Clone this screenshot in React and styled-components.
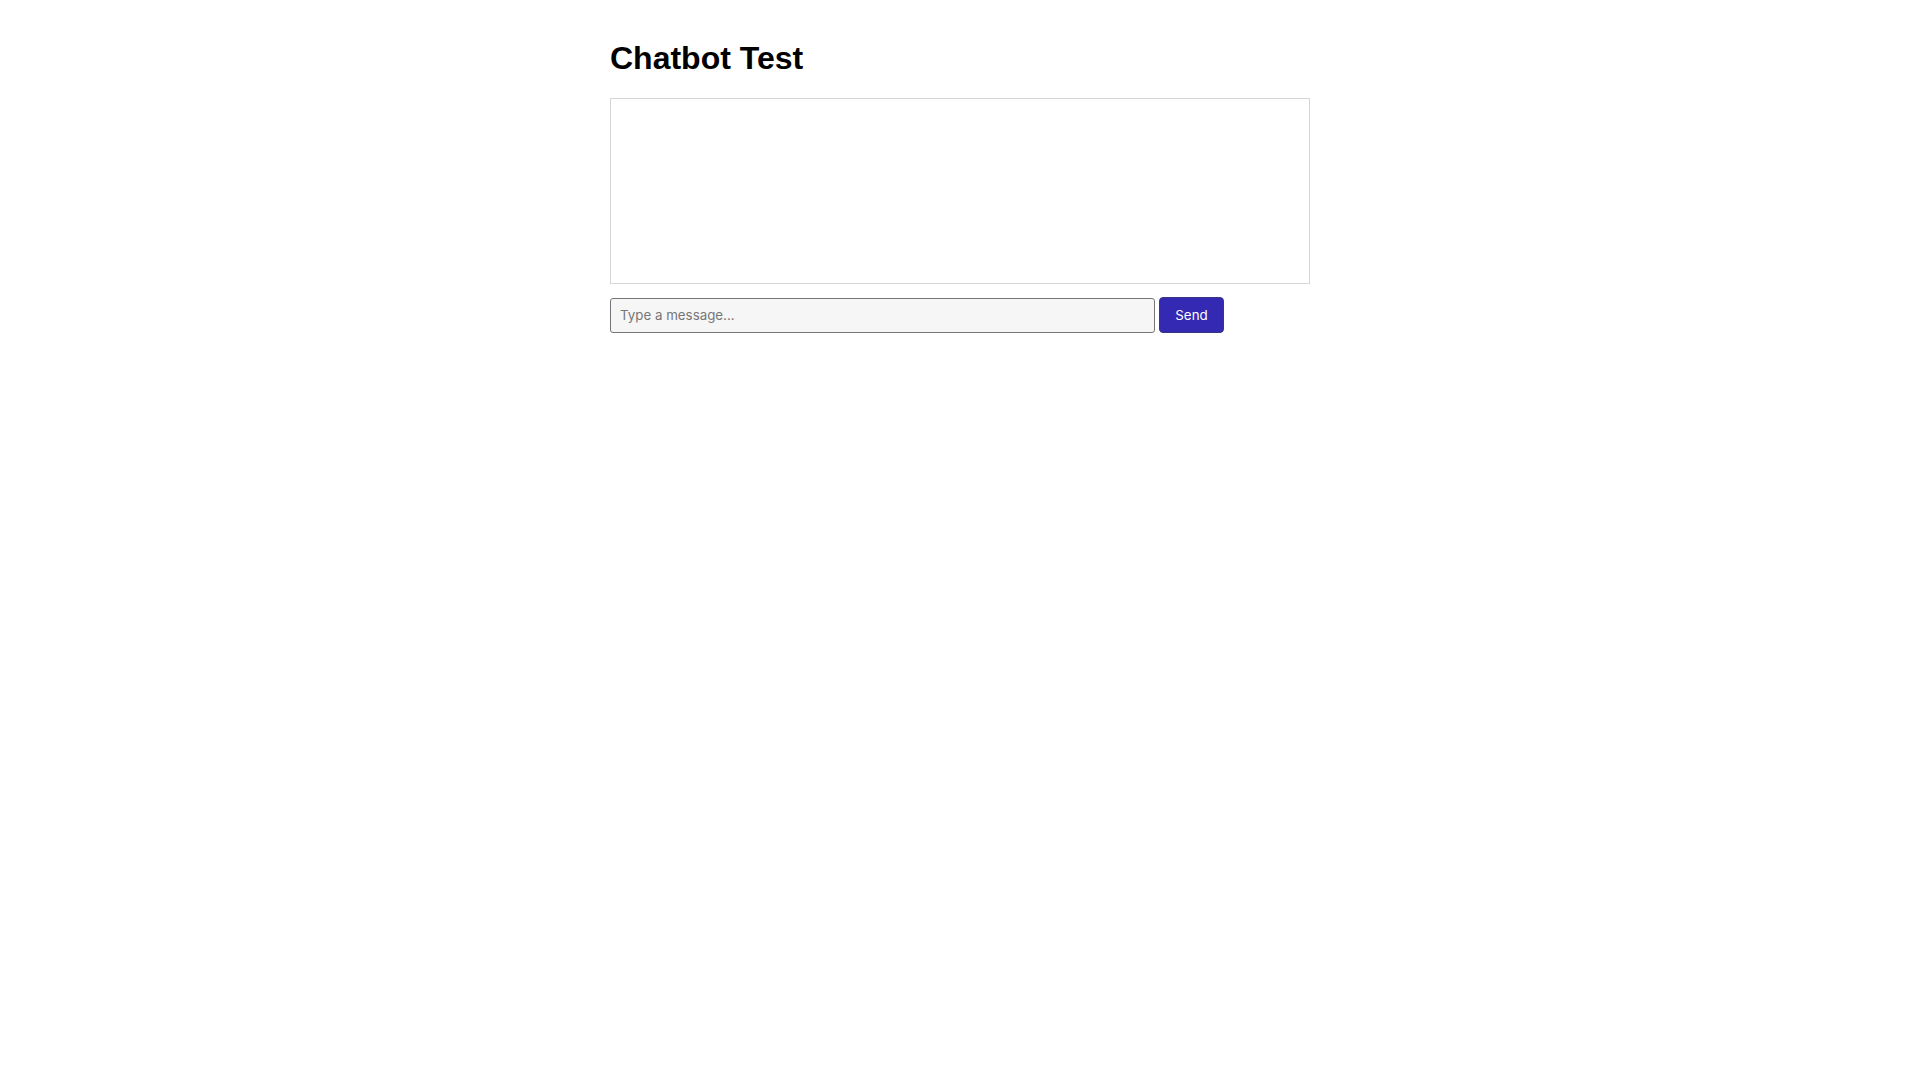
import React, { useState } from 'react'
import styled, { createGlobalStyle } from 'styled-components'

const Global = createGlobalStyle`
body {
  margin: 0;
  background: #fff;
  font-family: 'Liberation Sans', Arial, sans-serif;
}
`

const Page = styled.div`
width: 700px;
margin: 0 auto;
padding-top: 19px;
`

const Titulo = styled.h1`
font-family: 'Liberation Sans', Arial, sans-serif;
font-size: 32px;
font-weight: bold;
color: #000;
margin: 21px 0 21px;
line-height: 37px;
`

const Mensagens = styled.div`
box-sizing: border-box;
height: 186px;
border: 1px solid #d6d6d6;
padding: 10px;
overflow-y: auto;
`

const Linha = styled.div`
display: flex;
align-items: center;
gap: 4px;
margin-top: 13px;
`

const Entrada = styled.input`
box-sizing: border-box;
width: 545px;
height: 35px;
padding: 0 9px;
font-family: Inter, 'Noto Sans', sans-serif;
font-size: 13.33px;
color: #222;
background: #f6f6f6;
border: 1px solid #767676;
border-radius: 3px;
outline: none;

&::placeholder {
  color: #767676;
}
`

const BotaoEnviar = styled.button`
box-sizing: border-box;
width: 65px;
height: 36px;
font-family: Inter, 'Noto Sans', sans-serif;
font-size: 13.33px;
color: #fff;
background: #3329b2;
border: 1px solid #3b3680;
border-radius: 4px;
cursor: pointer;
`

export default function App() {
  const [texto, setTexto] = useState('')

  return (
    <Page>
      <Global />
      <Titulo>Chatbot Test</Titulo>
      <Mensagens />
      <Linha>
        <Entrada
          placeholder='Type a message...'
          value={texto}
          onChange={(e) => setTexto(e.target.value)}
        />
        <BotaoEnviar>Send</BotaoEnviar>
      </Linha>
    </Page>
  )
}
